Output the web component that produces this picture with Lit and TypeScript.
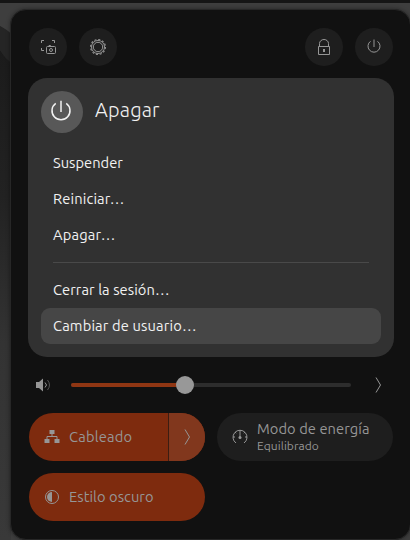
import { LitElement, html, css, svg } from "lit";
import { customElement } from "lit/decorators.js";

const chevron = html`<svg class="chev" width="7" height="16" viewBox="0 0 7 16" fill="none" stroke="currentColor"><path d="M1 .5 5.5 8 1 15.5" /></svg>`;
const power = svg`<path d="M8 .5v7.500M4.500 2.300a6 6 0 1 0 7 0" />`;

@customElement("app-root")
export class AppRoot extends LitElement {
  static styles = css`
    * { box-sizing: border-box; }
    :host {
      display: block; height: 540px; width: 410px; overflow: hidden; position: relative;
      font-family: Ubuntu, "Noto Sans", sans-serif; background: #363636;
    }
    .wall { position: absolute; inset: 0; }
    .panel {
      position: relative; margin: 9px 0 0 10px; width: 401px; height: 531px; padding: 18px 17px 0 18px;
      background: #111; border: 1px solid #272727; border-radius: 16px; box-shadow: 0 0 4px rgba(0,0,0,.4);
      color: #969696;
    }
    svg { display: block; flex: none; }
    .top { display: flex; gap: 12px; height: 38px; }
    .round { width: 38px; height: 38px; border-radius: 50%; background: #1e1e1e; display: grid; place-items: center; }
    .space { flex: 1; }
    .menu { margin: 12px 0 0 -1px; width: 366px; height: 279px; padding: 13px; border-radius: 19px; background: #313131; color: #f2f2f2; }
    .head { display: flex; align-items: center; gap: 12px; height: 42px; margin-bottom: 12px; }
    .badge { width: 42px; height: 42px; border-radius: 50%; background: #585858; display: grid; place-items: center; padding: 0 2px 1px 0; }
    .title { line-height: 28px; padding-bottom: 4px; font-weight: 300; }
    .item { width: 340px; height: 36px; padding: 0 0 2px 12px; border-radius: 9px; display: flex; align-items: center; }
    .hot { background: #464646; }
    .rule { height: 1px; margin: 9px 12px; background: #494949; }
    .volume { display: flex; align-items: center; height: 56px; padding-left: 6px; }
    .track { width: 280px; height: 4px; margin: 0 24px 0 20px; border-radius: 2px; background: #2d2d2d; display: flex; align-items: center; }
    .fill { width: 114px; height: 4px; border-radius: 2px; background: #8f3613; display: flex; align-items: center; justify-content: flex-end; }
    .knob { flex: none; width: 18px; height: 18px; border-radius: 50%; background: #989898; margin-right: -9px; }
    .grid { display: grid; grid-template-columns: 176px 176px; gap: 12px; }
    .tile { height: 48px; border-radius: 24px; background: #1e1e1e; display: flex; align-items: center; padding-left: 15px; gap: 9px; overflow: hidden; }
    .on { background: #7e2b0e; }
    .more { margin-left: auto; width: 37px; height: 48px; background: #81371d; border-left: 1px solid #3c1d12; display: grid; place-items: center; }
    .label { line-height: 18px; white-space: nowrap; }
    .on .label { padding-bottom: 2px; }
    .sub { line-height: 16px; margin-top: -2px; padding-bottom: 2px; }
  `;

  private text(s: string, size: number, spacing: number) {
    return html`<span style="font-size:${size}px;letter-spacing:${spacing}px">${s}</span>`;
  }

  render() {
    return html`
      <svg class="wall" width="410" height="540">
        <defs><linearGradient id="w" x1="0" y1="0" x2="0" y2="1">
          <stop offset="0" stop-color="#1b1b1b" /><stop offset=".3" stop-color="#222" /><stop offset=".6" stop-color="#333" /><stop offset="1" stop-color="#393939" />
        </linearGradient></defs>
        <rect width="410" height="540" fill="#3e3e3e" />
        <path d="M0 26 11 33V540H0z" fill="#2e2e2e" />
        <path d="M0 50 11 63V540H0z" fill="url(#w)" />
        <path d="M0 26Q6 29 11 34V62Q5 59 0 50z" fill="#252525" />
        <rect width="410" height="3" fill="#151515" />
      </svg>
      <div class="panel">
        <div class="top">
          <div class="round"><svg width="16" height="16" viewBox="0 0 16 16" fill="none" stroke="currentColor">
            <path d="M1.500 4V1.500h2.500M12 1.500h2.500V4M1.500 9v2.500H4" /><rect x="6.500" y="7.500" width="9" height="7" rx="1" /><path d="M9 7V6.500h1.500V7" /><circle cx="11" cy="11" r="1.500" /></svg></div>
          <div class="round"><svg width="16" height="16" viewBox="-8 -8 16 16" fill="none" stroke="currentColor">
            <circle r="4.700" /><circle r="6.500" />
            <circle r="7.400" stroke-width="1.200" stroke-dasharray="2.050 1.825" /></svg></div>
          <span class="space"></span>
          <div class="round"><svg width="12" height="16" viewBox="0 0 12 16" fill="none" stroke="currentColor">
            <path d="M.5 7.500h11v8H.5zM1.500 7V4.500a4.500 4 0 0 1 9 0V7" /><path d="M6 10v3" stroke-width="2" /></svg></div>
          <div class="round"><svg width="16" height="16" viewBox="0 0 16 16" fill="none" stroke="currentColor">${power}</svg></div>
        </div>
        <div class="menu">
          <div class="head">
            <div class="badge"><svg width="24" height="24" viewBox="0 0 16 16" fill="none" stroke="currentColor">${power}</svg></div>
            <div class="title">${this.text("Apagar", 20, 0.2)}</div>
          </div>
          <div class="item">${this.text("Suspender", 14.67, 0.02)}</div>
          <div class="item">${this.text("Reiniciar…", 14.67, 0.15)}</div>
          <div class="item">${this.text("Apagar…", 14.67, 0.2)}</div>
          <div class="rule"></div>
          <div class="item">${this.text("Cerrar la sesión…", 14.67, 0.08)}</div>
          <div class="item hot">${this.text("Cambiar de usuario…", 14.67, 0.16)}</div>
        </div>
        <div class="volume">
          <svg width="16" height="16" viewBox="0 0 16 16" fill="none" stroke="currentColor">
            <path d="M1 5h3l4-3.500v13L4 11H1z" fill="currentColor" stroke="none" /><path d="M10 5.500q3 2.500 0 5" /><path d="M12.500 3q4 5 0 10" opacity=".5" /></svg>
          <div class="track"><div class="fill"><div class="knob"></div></div></div>
          ${chevron}
        </div>
        <div class="grid">
          <div class="tile on">
            <svg width="16" height="16" viewBox="0 0 16 16" fill="currentColor"><path d="M5.500 1h5v4h-5zM.5 10h5v4h-5zM10.500 10h5v4h-5z" /><path d="M8 5v2.500M3 10V7.500h10V10" fill="none" stroke="currentColor" /></svg>
            <div class="label">${this.text("Cableado", 14.67, 0.2)}</div>
            <div class="more">${chevron}</div>
          </div>
          <div class="tile">
            <svg width="16" height="16" viewBox="0 0 16 16" fill="none" stroke="currentColor"><path d="M4 14a7 7 0 1 1 8 0M8 1v8M1 8h2M13 8h2M3 3l1.200 1.200M13 3l-1.200 1.200" /><circle cx="8" cy="8.500" r="1.500" fill="currentColor" stroke="none" /></svg>
            <div class="label"><div>${this.text("Modo de energía", 14.67, 0.07)}</div><div class="sub">${this.text("Equilibrado", 12, 0.05)}</div></div>
          </div>
          <div class="tile on">
            <svg width="16" height="16" viewBox="0 0 16 16" fill="none" stroke="currentColor"><circle cx="8" cy="8" r="6.500" /><path d="M8 3a5 5 0 0 0 0 10z" fill="currentColor" stroke="none" /></svg>
            <div class="label">${this.text("Estilo oscuro", 14.67, 0.05)}</div>
          </div>
        </div>
      </div>`;
  }
}
